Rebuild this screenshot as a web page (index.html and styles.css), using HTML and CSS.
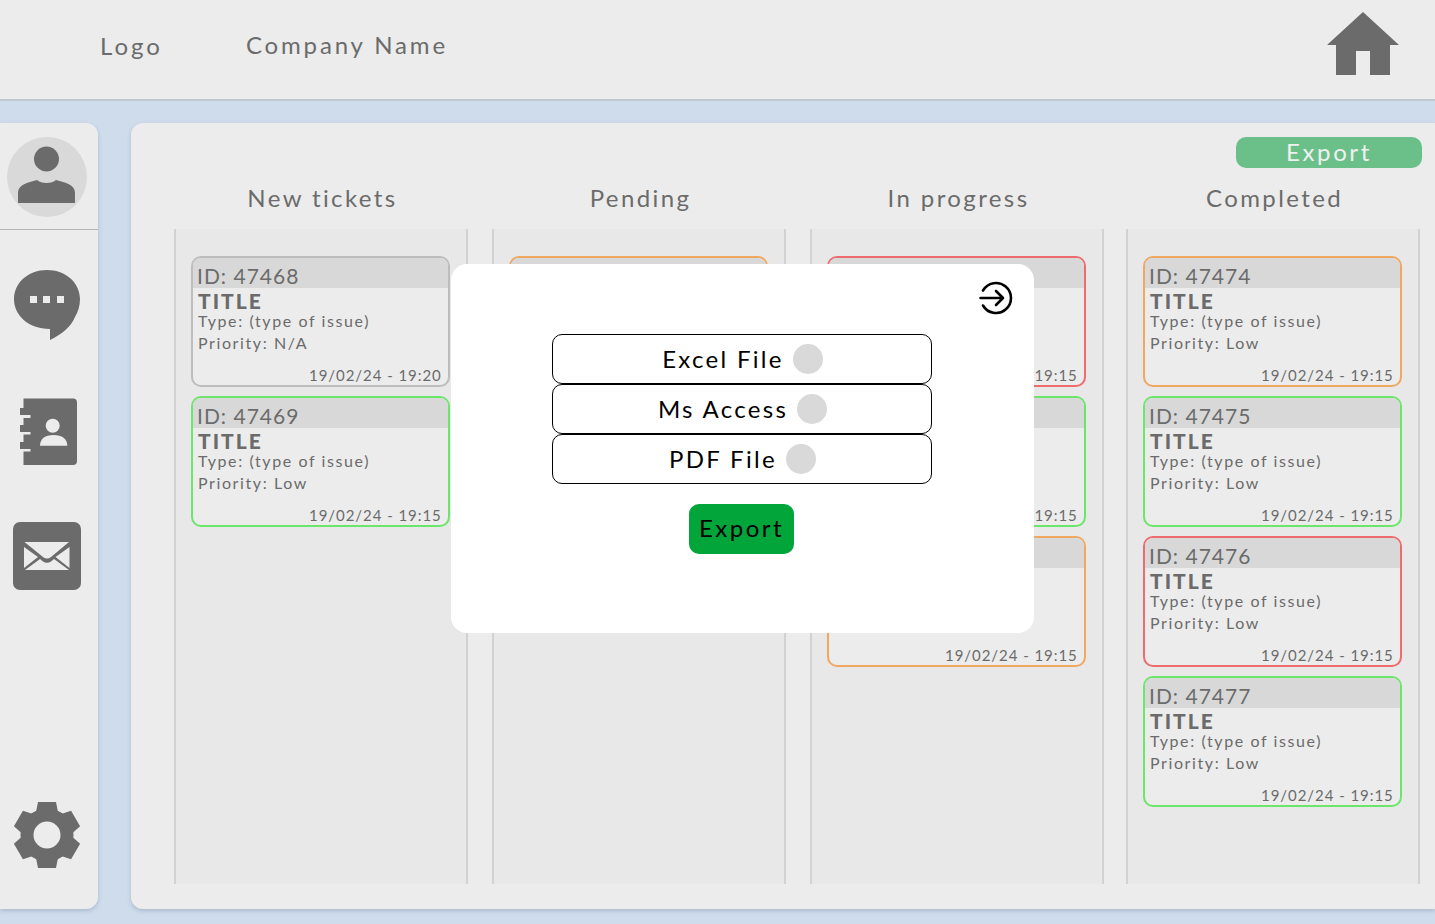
FILE: index.html
```html
<!DOCTYPE html>
<html lang="en">
<head>
<meta charset="utf-8">
<title>Tickets</title>
<link rel="stylesheet" href="styles.css">
</head>
<body>
<header class="topbar">
  <span class="logo">Logo</span>
  <span class="company">Company Name</span>
  <svg class="home" viewBox="0 0 72 63"><path d="M36 0 72 33H63V63H43V39H29V63H9V33H0Z"/></svg>
</header>
<div class="body-row">
  <aside class="sidebar">
    <div class="avatar-wrap">
      <svg class="avatar" viewBox="0 0 80 80"><circle cx="40" cy="40" r="40" fill="#d9d9d9"/><circle cx="39.5" cy="22" r="12.500" fill="#6b6b6b"/><path d="M11 66V56C11 50 16 47 23 45L30 43C34 47 45 47 49 43L56 45C63 47 68 50 68 56V66Z" fill="#6b6b6b"/></svg>
    </div>
    <nav class="nav">
      <svg class="nav-icon" viewBox="0 0 68 72"><path d="M34 1C15 1 1 14 1 30S15 60 37 60V71C49 65 58 58 62 48 65 43 67 37 67 30 67 14 53 1 34 1Z"/><rect x="17" y="27" width="7" height="7" fill="#ececec"/><rect x="30" y="27" width="7" height="7" fill="#ececec"/><rect x="44" y="27" width="7" height="7" fill="#ececec"/></svg>
      <svg class="nav-icon" viewBox="0 0 68 68"><path d="M10.500 .5H60Q64 .5 64 4.500V63Q64 67 60 67H10.500V53.500H17.500V51H7V44H10.500V36.500H17.500V34H7V27H10.500V20H17.500V17H7V10H10.500Z"/><circle cx="39.700" cy="27.700" r="7" fill="#ececec"/><path d="M27 47.700C27 41 32 37 40.500 37S54.300 41 54.300 47.700Z" fill="#ececec"/></svg>
      <svg class="nav-icon" viewBox="0 0 68 68"><rect width="68" height="68" rx="7"/><path d="M11 25V46L25 35ZM56.500 25V46L42.500 35ZM11.500 20H56L38 35Q34 38 30 35ZM12 48 27 37 30 39.500Q34 42 38 39.500L41 37 56 48Z" fill="#ececec"/></svg>
      <svg class="nav-icon gear" viewBox="0 0 68 68"><g fill="#6b6b6b"><circle cx="34" cy="34" r="20" fill="none" stroke="#6b6b6b" stroke-width="13"/><path d="M25 1H43L46 16H22Z"/><path d="M25 1H43L46 16H22Z" transform="rotate(60 34 34)"/><path d="M25 1H43L46 16H22Z" transform="rotate(120 34 34)"/><path d="M25 1H43L46 16H22Z" transform="rotate(180 34 34)"/><path d="M25 1H43L46 16H22Z" transform="rotate(240 34 34)"/><path d="M25 1H43L46 16H22Z" transform="rotate(300 34 34)"/></g></svg>
    </nav>
  </aside>
  <main class="board">
    <div class="board-actions"><button class="export-btn">Export</button></div>
    <div class="columns">
      <section class="column">
        <h2 class="column-title">New tickets</h2>
        <div class="lane">
          <article class="card card-grey"><div class="card-id">ID: 47468</div><div class="card-title">TITLE</div><div class="card-line">Type: (type of issue)</div><div class="card-line">Priority: N/A</div><div class="card-date">19/02/24 - 19:20</div></article>
          <article class="card card-green"><div class="card-id">ID: 47469</div><div class="card-title">TITLE</div><div class="card-line">Type: (type of issue)</div><div class="card-line">Priority: Low</div><div class="card-date">19/02/24 - 19:15</div></article>
        </div>
      </section>
      <section class="column">
        <h2 class="column-title">Pending</h2>
        <div class="lane">
          <article class="card card-orange"><div class="card-id">ID: 47470</div><div class="card-title">TITLE</div><div class="card-line">Type: (type of issue)</div><div class="card-line">Priority: Low</div><div class="card-date">19/02/24 - 19:15</div></article>
        </div>
      </section>
      <section class="column">
        <h2 class="column-title">In progress</h2>
        <div class="lane">
          <article class="card card-red"><div class="card-id">ID: 47471</div><div class="card-title">TITLE</div><div class="card-line">Type: (type of issue)</div><div class="card-line">Priority: Low</div><div class="card-date">19/02/24 - 19:15</div></article>
          <article class="card card-green"><div class="card-id">ID: 47472</div><div class="card-title">TITLE</div><div class="card-line">Type: (type of issue)</div><div class="card-line">Priority: Low</div><div class="card-date">19/02/24 - 19:15</div></article>
          <article class="card card-orange"><div class="card-id">ID: 47473</div><div class="card-title">TITLE</div><div class="card-line">Type: (type of issue)</div><div class="card-line">Priority: Low</div><div class="card-date">19/02/24 - 19:15</div></article>
        </div>
      </section>
      <section class="column column-last">
        <h2 class="column-title">Completed</h2>
        <div class="lane">
          <article class="card card-orange"><div class="card-id">ID: 47474</div><div class="card-title">TITLE</div><div class="card-line">Type: (type of issue)</div><div class="card-line">Priority: Low</div><div class="card-date">19/02/24 - 19:15</div></article>
          <article class="card card-green"><div class="card-id">ID: 47475</div><div class="card-title">TITLE</div><div class="card-line">Type: (type of issue)</div><div class="card-line">Priority: Low</div><div class="card-date">19/02/24 - 19:15</div></article>
          <article class="card card-red"><div class="card-id">ID: 47476</div><div class="card-title">TITLE</div><div class="card-line">Type: (type of issue)</div><div class="card-line">Priority: Low</div><div class="card-date">19/02/24 - 19:15</div></article>
          <article class="card card-green"><div class="card-id">ID: 47477</div><div class="card-title">TITLE</div><div class="card-line">Type: (type of issue)</div><div class="card-line">Priority: Low</div><div class="card-date">19/02/24 - 19:15</div></article>
        </div>
      </section>
    </div>
  </main>
</div>
<div class="modal">
  <svg class="modal-close" viewBox="0 0 34 34"><path d="M4 9.500A15 15 0 1 1 4 24.500" fill="none" stroke="#000" stroke-width="2.600" stroke-linecap="round"/><path d="M1.500 17H24M17 10 24 17 17 24" fill="none" stroke="#000" stroke-width="2.600" stroke-linecap="round" stroke-linejoin="round"/></svg>
  <div class="options">
    <div class="option"><span class="option-label">Excel File</span><i class="dot"></i></div>
    <div class="option"><span class="option-label">Ms Access</span><i class="dot"></i></div>
    <div class="option"><span class="option-label">PDF File</span><i class="dot"></i></div>
  </div>
  <button class="modal-export">Export</button>
</div>
</body>
</html>
```
FILE: styles.css
```css
* { box-sizing: border-box; }
html, body { margin: 0; height: 100%; }
body {
  width: 1435px;
  height: 924px;
  overflow: hidden;
  background: #cfdcec;
  font-family: "Lato", "Open Sans", sans-serif;
  color: #6b6b6b;
  display: flex;
  flex-direction: column;
  position: relative;
}
.topbar {
  height: 101px;
  flex: none;
  background: #ececec;
  border-bottom: 2px solid #c0c8d2;
  display: flex;
  align-items: center;
  padding: 0 36px 10px 100px;
}
.logo { font-size: 24px; letter-spacing: 3px; margin-right: 83px; position: relative; top: 1px; }
.company { font-size: 24px; letter-spacing: 2.85px; }
.home { width: 72px; height: 63px; margin: 0 0 2px auto; fill: #6b6b6b; display: block; }
.body-row {
  flex: 1;
  display: flex;
  gap: 33px;
  padding: 22px 0 15px;
  min-height: 0;
}
.sidebar {
  width: 98px;
  flex: none;
  background: #ececec;
  border-radius: 0 12px 12px 0;
  box-shadow: 0 2px 4px rgba(90,110,140,.3);
  display: flex;
  flex-direction: column;
}
.avatar-wrap {
  height: 107px;
  flex: none;
  border-bottom: 1px solid #b5b5b5;
  padding: 14px 0 0 7px;
}
.avatar { width: 80px; height: 80px; display: block; }
.nav {
  flex: 1;
  display: flex;
  flex-direction: column;
  align-items: flex-start;
  padding: 39px 0 40px 13px;
}
.nav-icon { width: 68px; fill: #6b6b6b; display: block; flex: none; height: 68px; }
.nav-icon:nth-child(1) { height: 72px; margin-bottom: 57px; }
.nav-icon:nth-child(2) { margin-bottom: 56px; }
.gear { margin-top: auto; }
.board {
  flex: 1;
  background: #ececec;
  border-radius: 12px 0 0 12px;
  box-shadow: 0 2px 4px rgba(90,110,140,.3);
  padding: 14px 13px 25px 43px;
  display: flex;
  flex-direction: column;
  min-width: 0;
}
.board-actions { display: flex; justify-content: flex-end; height: 31px; flex: none; }
.export-btn {
  width: 186px;
  height: 31px;
  border: 0;
  border-radius: 10px;
  background: #6bc08a;
  color: #f0f0f0;
  font: inherit;
  font-size: 24px;
  line-height: 29px;
  letter-spacing: 2.6px;
  padding: 0 0 2px;
}
.columns { flex: 1; display: flex; gap: 24px; min-height: 0; }
.column { width: 294px; flex: none; display: flex; flex-direction: column; }
.column-last { margin-left: -2px; }
.column-title {
  margin: 0;
  height: 61px;
  flex: none;
  padding: 15px 0 0 3px;
  text-align: center;
  font-size: 24px;
  line-height: 30px;
  font-weight: 400;
  letter-spacing: 2.4px;
}
.lane {
  flex: 1;
  background: #e8e8e8;
  border-left: 2px solid #d2d2d2;
  border-right: 2px solid #d2d2d2;
  padding: 27px 16px 0 15px;
  display: flex;
  flex-direction: column;
  gap: 9px;
}
.card {
  width: 259px;
  height: 131px;
  flex: none;
  background: #ececec;
  border: 2px solid;
  border-radius: 10px;
  overflow: hidden;
}
.card-grey { border-color: #bdbdbd; }
.card-green { border-color: #6be66b; }
.card-orange { border-color: #f0a860; }
.card-red { border-color: #ee6b6e; }
.card-id {
  height: 30px;
  background: #d8d8d8;
  padding-left: 4px;
  font-size: 21px;
  line-height: 36px;
  letter-spacing: 1px;
}
.card-title {
  padding: 4px 0 0 5px;
  font-size: 21px;
  line-height: 18px;
  font-weight: 900;
  letter-spacing: 2px;
}
.card-line {
  padding-left: 5px;
  font-size: 16px;
  line-height: 22px;
  letter-spacing: 1.6px;
}
.card-date {
  padding-left: 116px;
  margin-top: 12px;
  font-size: 15px;
  line-height: 18px;
  letter-spacing: .95px;
  white-space: nowrap;
}
.modal {
  position: absolute;
  left: 451px;
  top: 264px;
  width: 583px;
  height: 369px;
  background: #fff;
  border-radius: 16px;
  padding: 70px 0 0 101px;
  color: #000;
}
.modal-close { position: absolute; left: 528px; top: 17px; width: 34px; height: 34px; }
.options { width: 380px; display: flex; flex-direction: column; }
.option {
  height: 50px;
  border: 1px solid #000;
  border-radius: 10px;
  display: flex;
  align-items: center;
  justify-content: center;
  gap: 10px;
  font-size: 24px;
  letter-spacing: 2.3px;
}
.option-label { position: relative; top: -1px; left: 1px; }
.dot { width: 30px; height: 30px; border-radius: 50%; background: #d9d9d9; display: block; }
.modal-export {
  display: block;
  width: 105px;
  height: 50px;
  margin: 20px 0 0 137px;
  border: 0;
  border-radius: 10px;
  background: #02a53a;
  color: #000;
  font: inherit;
  font-size: 24px;
  letter-spacing: 2.5px;
  padding: 0 0 4px;
}
```
